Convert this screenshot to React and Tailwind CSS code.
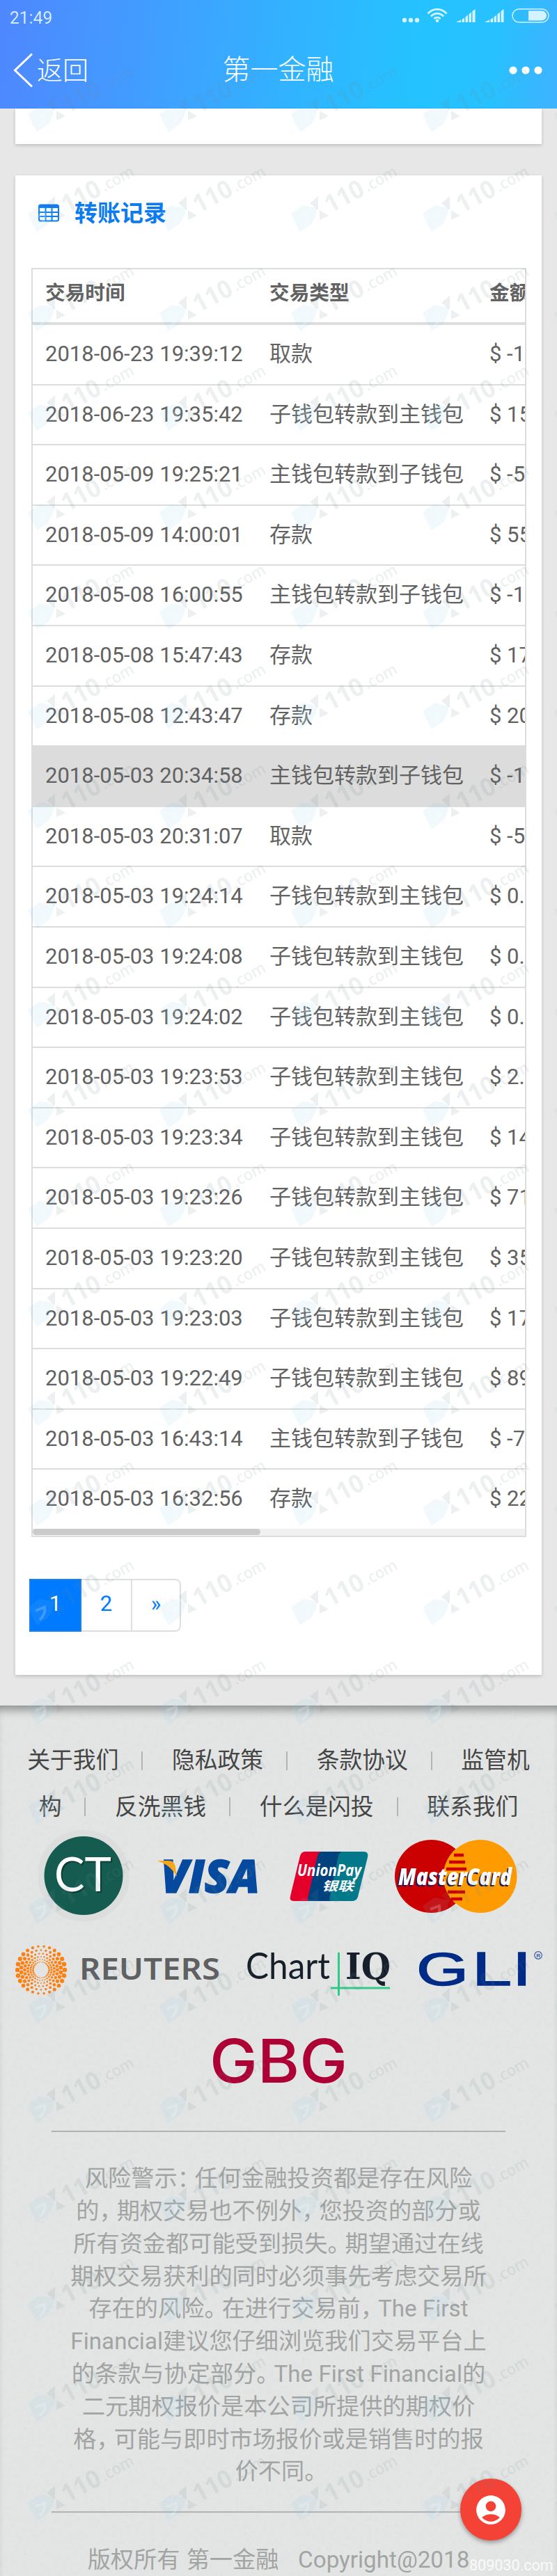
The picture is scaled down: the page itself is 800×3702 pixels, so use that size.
import React from 'react';
import { MdAccountCircle } from 'react-icons/md';

const transfers = [
  { time: '2018-06-23 19:39:12', type: '取款', amount: '$ -1' },
  { time: '2018-06-23 19:35:42', type: '子钱包转款到主钱包', amount: '$ 15' },
  { time: '2018-05-09 19:25:21', type: '主钱包转款到子钱包', amount: '$ -5' },
  { time: '2018-05-09 14:00:01', type: '存款', amount: '$ 55' },
  { time: '2018-05-08 16:00:55', type: '主钱包转款到子钱包', amount: '$ -1' },
  { time: '2018-05-08 15:47:43', type: '存款', amount: '$ 17' },
  { time: '2018-05-08 12:43:47', type: '存款', amount: '$ 20' },
  { time: '2018-05-03 20:34:58', type: '主钱包转款到子钱包', amount: '$ -1', active: true },
  { time: '2018-05-03 20:31:07', type: '取款', amount: '$ -5' },
  { time: '2018-05-03 19:24:14', type: '子钱包转款到主钱包', amount: '$ 0.' },
  { time: '2018-05-03 19:24:08', type: '子钱包转款到主钱包', amount: '$ 0.' },
  { time: '2018-05-03 19:24:02', type: '子钱包转款到主钱包', amount: '$ 0.' },
  { time: '2018-05-03 19:23:53', type: '子钱包转款到主钱包', amount: '$ 2.' },
  { time: '2018-05-03 19:23:34', type: '子钱包转款到主钱包', amount: '$ 14' },
  { time: '2018-05-03 19:23:26', type: '子钱包转款到主钱包', amount: '$ 71' },
  { time: '2018-05-03 19:23:20', type: '子钱包转款到主钱包', amount: '$ 35' },
  { time: '2018-05-03 19:23:03', type: '子钱包转款到主钱包', amount: '$ 17' },
  { time: '2018-05-03 19:22:49', type: '子钱包转款到主钱包', amount: '$ 89' },
  { time: '2018-05-03 16:43:14', type: '主钱包转款到子钱包', amount: '$ -7' },
  { time: '2018-05-03 16:32:56', type: '存款', amount: '$ 22' },
];

const linkRows = [
  ['关于我们', '隐私政策', '条款协议', '监管机'],
  ['构', '反洗黑钱', '什么是闪投', '联系我们'],
];

const warning = [
  '风险警示：任何金融投资都是存在风险',
  '的，期权交易也不例外，您投资的部分或',
  '所有资金都可能受到损失。期望通过在线',
  '期权交易获利的同时必须事先考虑交易所',
  '存在的风险。在进行交易前，The First',
  'Financial建议您仔细浏览我们交易平台上',
  '的条款与协定部分。The First Financial的',
  '二元期权报价是本公司所提供的期权价',
  '格，可能与即时市场报价或是销售时的报',
  '价不同。',
];

// Text stretched to an exact width, used by the partner logos
const LogoText = ({ x, y, w, size, family, fill, weight = 400, italic, children }) => (
  <text
    x={x}
    y={y}
    textLength={w}
    lengthAdjust="spacingAndGlyphs"
    fontSize={size}
    fontFamily={family}
    fontWeight={weight}
    fontStyle={italic ? 'italic' : 'normal'}
    fill={fill}
  >
    {children}
  </text>
);

const Signal = () => (
  <svg width="28" height="20" viewBox="0 0 28 20" fill="#d5f3ff">
    <path d="M0 19 L7 15.5 V19Z M8.5 15 L12 12.5 V19 H8.5Z M13.5 11.5 L17 8.5 V19 H13.5Z M18.5 7.5 L22 4.5 V19 H18.5Z M23.5 3 L27.5 0 V19 H23.5Z" />
  </svg>
);

const StatusBar = () => (
  <div className="flex h-[70px] items-start justify-between pl-[14px] pr-[11px] pt-[12px]">
    <span className="origin-left scale-x-[0.93] text-[26.5px] leading-[47px] -mt-[11px] text-[#d5ebff]">21:49</span>
    <div className="flex items-start">
      <svg className="mt-[13px]" width="26" height="8" viewBox="0 0 26 8" fill="#d5f3ff">
        <circle cx="4" cy="4" r="3.2" />
        <circle cx="13" cy="4" r="3.2" />
        <circle cx="22" cy="4" r="3.2" />
      </svg>
      <svg className="ml-[10px]" width="30" height="21" viewBox="0 0 30 21" fill="none" stroke="#d5f3ff" strokeWidth="2.7">
        <path d="M1.5 7.5 C9 -0.8 21 -0.8 28.5 7.5" />
        <path d="M6 11.5 C11 6 19 6 24 11.5" />
        <path d="M10.5 15 C13 12.3 17 12.3 19.5 15" />
        <circle cx="15" cy="17.8" r="2.3" fill="#d5f3ff" stroke="none" />
      </svg>
      <div className="ml-[12px] mt-px"><Signal /></div>
      <div className="ml-[13px] mt-px"><Signal /></div>
      <svg className="ml-[11px]" width="54" height="21" viewBox="0 0 54 21">
        <rect x="1" y="1" width="52" height="19" rx="9.5" fill="none" stroke="#d5f3ff" strokeWidth="1.5" />
        <path d="M24 3.5 H43 A7 7 0 0 1 43 17.5 H24Z" fill="#d5f3ff" />
      </svg>
    </div>
  </div>
);

const Header = () => (
  <header className="h-[156px] bg-[linear-gradient(97deg,#4f87ff_0%,#429cff_25%,#33b1ff_50%,#24c3ff_75%,#28c1ff_88%,#3fb2ff_100%)]">
    <StatusBar />
    <div className="grid h-[62px] grid-cols-3 items-center pl-[19px] pr-[20px] font-light text-white">
      <div className="flex items-center">
        <svg width="29" height="50" viewBox="0 0 29 50" fill="none" stroke="white" strokeWidth="3">
          <path d="M27 1.5 L2.5 25 L27 48.5" />
        </svg>
        <span className="ml-[5px] mt-[3px] text-[37px]">返回</span>
      </div>
      <h1 className="text-center text-[40px]">第一金融</h1>
      <svg className="justify-self-end" width="50" height="12" viewBox="0 0 50 12" fill="white">
        <circle cx="7" cy="6" r="5.6" />
        <circle cx="25" cy="6" r="5.6" />
        <circle cx="43" cy="6" r="5.6" />
      </svg>
    </div>
  </header>
);

const TransferTable = () => (
  <div className="mx-[23px] h-[1824px] w-[711px] overflow-hidden whitespace-nowrap border-2 border-[#dcdddd] text-[#626262]">
    <div className="grid h-[80px] grid-cols-[315px_316px_200px] border-b-4 border-[#dcdddd] pl-[18px] text-[28.7px] font-bold leading-[69px]">
      <span>交易时间</span>
      <span className="pl-[7px]">交易类型</span>
      <span className="pl-[7px]">金额</span>
    </div>
    {transfers.map((row, index) => (
      <div
        key={index}
        className={`grid grid-cols-[322px_316px_200px] border-[#dcdddd] pl-[18px] text-[31px] leading-[83px] ${
          row.active ? 'bg-[#dcdcdc]' : ''
        } ${index === transfers.length - 1 ? 'h-[85px]' : 'h-[86.6px] border-b-2'}`}
      >
        <span>{row.time}</span>
        <span>{row.type}</span>
        <span>{row.amount}</span>
      </div>
    ))}
    {/* Horizontal scrollbar */}
    <div className="h-[10px] bg-[#f1f1f1]">
      <div className="h-[9px] w-[327px] rounded-md bg-[#cbcbcb]" />
    </div>
  </div>
);

const Pagination = () => (
  <div className="ml-[20px] mt-[60px] flex h-[76px] w-[218px] overflow-hidden rounded-r-lg text-center text-[31px] leading-[68px] text-[#007bff]">
    <div className="w-[75px] border-2 border-[#1b80ef] bg-[#007bff] text-white">1</div>
    <div className="w-[73px] border-y-2 border-r-2 border-[#dcdee0]">2</div>
    <div className="w-[70px] rounded-r-lg border-y-2 border-r-2 border-[#dcdee0]">»</div>
  </div>
);

// Orange dotted sun: rings of dots, larger towards the left and right
const rings = [
  { r: 34, n: 26, s: 2.2 },
  { r: 28.5, n: 26, s: 1.9 },
  { r: 23.5, n: 26, s: 1.6 },
  { r: 19, n: 26, s: 1.35 },
  { r: 15, n: 26, s: 1.1 },
  { r: 11.5, n: 26, s: 0.95 },
];

const Reuters = () => (
  <svg width="293" height="100" viewBox="22 2780 293 100">
    {rings.map((ring, i) =>
      Array.from({ length: ring.n }, (_, k) => {
        const a = ((k + (i % 2) * 0.5) / ring.n) * Math.PI * 2;
        return (
          <circle
            key={`${i}-${k}`}
            cx={59 + Math.cos(a) * ring.r}
            cy={2831 + Math.sin(a) * ring.r}
            r={ring.s * (0.7 + 0.8 * Math.abs(Math.cos(a)))}
            fill="#fb8114"
          />
        );
      })
    )}
    <LogoText x={114} y={2845} w={202} size={43} family="Noto Sans" weight={600} fill="#5f6062">REUTERS</LogoText>
  </svg>
);

const ChartIQ = () => (
  <svg width="205" height="100" viewBox="355 2780 205 100">
    <LogoText x={353} y={2844} w={121} size={52} family="Lato" weight={400} fill="#17202a">Chart</LogoText>
    <LogoText x={496} y={2844} w={65} size={52} family="DejaVu Serif" weight={700} fill="#17202a">IQ</LogoText>
    <path d="M486.5 2806 V2868 M475 2857 H560" stroke="#30cb8b" strokeWidth="3" />
  </svg>
);

const Gli = () => (
  <svg width="178" height="100" viewBox="602 2780 178 100">
    <g stroke="#002b87" strokeWidth="1.5">
      <LogoText x={598} y={2853} w={75} size={67} family="Liberation Sans" fill="#002b87">G</LogoText>
      <LogoText x={678} y={2853} w={57} size={68} family="Liberation Sans" fill="#002b87">L</LogoText>
      <LogoText x={736} y={2853} w={27} size={68} family="Liberation Sans" fill="#002b87">I</LogoText>
    </g>
    <circle cx="773" cy="2810" r="5.3" fill="none" stroke="#3c5a9e" strokeWidth="1.2" />
    <text x="770.3" y="2813" fontSize="8" fontFamily="Liberation Sans" fontWeight="700" fill="#3c5a9e">R</text>
  </svg>
);

const CtLogo = () => (
  <svg width="130" height="140" viewBox="55 2625 130 140">
    <circle cx="120" cy="2695.5" r="66" fill="#dcdddd" />
    <circle cx="120" cy="2695.5" r="56.5" fill="#155b50" />
    <g className="[filter:drop-shadow(2px_2px_0_#0c3d35)]">
      <LogoText x={78} y={2718} w={82} size={68} family="Lato" fill="#ffffff">CT</LogoText>
    </g>
  </svg>
);

const Visa = () => (
  <svg width="148" height="140" viewBox="226 2625 148 140">
    <g stroke="#064a9f" strokeWidth="1.5">
      <LogoText x={231} y={2720} w={142} size={65} family="Open Sans" weight={800} italic fill="#064a9f">VISA</LogoText>
    </g>
    <path d="M225 2674 H242 C249 2674 251 2678 252 2684 L254 2697 C248 2686 238 2677 225 2674Z" fill="#f9a61a" />
  </svg>
);

const UnionPay = () => (
  <svg width="115" height="140" viewBox="415 2625 115 140">
    <path d="M438 2661 H462 L448 2732 H422 Q415 2732 417 2725 L431 2667 Q433 2661 438 2661Z" fill="#e4002b" />
    <path d="M462 2661 H494 L480 2732 H443 Q441 2730 443 2724 L456 2667 Q458 2661 462 2661Z" fill="#01417e" />
    <path d="M492 2661 H522 Q530 2661 528 2669 L514 2726 Q512 2732 506 2732 H475 Q472 2730 474 2724 L486 2667 Q488 2661 492 2661Z" fill="#01798a" />
    <LogoText x={427} y={2696} w={92} size={23} family="Open Sans" weight={700} italic fill="#ffffff">UnionPay</LogoText>
    <LogoText x={462} y={2717} w={46} size={18} family="Noto Sans CJK SC" weight={700} italic fill="#ffffff">银联</LogoText>
  </svg>
);

const MasterCard = () => (
  <svg width="176" height="140" viewBox="567 2625 176 140">
    <circle cx="619.5" cy="2696.5" r="52.5" fill="#cb0000" />
    <circle cx="690" cy="2696.5" r="52.5" fill="#fe9b00" />
    <path d="M654 2657.5 a52.5 52.5 0 0 0 0 78 a52.5 52.5 0 0 0 0 -78Z" fill="#fe9b00" />
    <path d="M652 2666 H666 M645 2676 H668 M641 2686 H670 M643 2719 H668 M648 2729 H664" stroke="#cb0000" strokeWidth="4.5" />
    <g className="[filter:drop-shadow(-1.5px_2px_0_#1c1c5c)]">
      <LogoText x={572} y={2709} w={163} size={34} family="Open Sans" weight={800} italic fill="#ffffff">MasterCard</LogoText>
    </g>
  </svg>
);

const Gbg = () => (
  <svg width="200" height="80" viewBox="301 2922 200 80">
    <LogoText x={302} y={2993} w={198} size={87} family="Inter" weight={500} fill="#ad0136">GBG</LogoText>
  </svg>
);

// Full-width punctuation is set tighter than the characters
const WarningLine = ({ text }) => (
  <span className="block whitespace-nowrap">
    {text.split(/([，。：])/).map((part, i) => (
      <span key={i} className={i % 2 ? 'tracking-[-8px]' : ''}>{part}</span>
    ))}
  </span>
);

const Footer = () => (
  <footer className="relative h-[1251px] overflow-hidden bg-[#e4e6e5] shadow-[inset_0_14px_14px_-8px_rgba(0,0,0,0.4)]">
    <svg className="absolute inset-0 opacity-[0.07]" width="800" height="1251">
      <filter id="paper">
        <feTurbulence type="fractalNoise" baseFrequency="0.18" numOctaves="2" />
        <feColorMatrix type="saturate" values="0" />
      </filter>
      <rect width="800" height="1251" filter="url(#paper)" />
    </svg>
    <div className="relative">
      <nav className="pt-[46px] text-[32.8px] leading-[66.6px] text-[#454545]">
        {linkRows.map((links, row) => (
          <div key={row} className="flex items-center justify-center">
            {links.map((link, i) => (
              <React.Fragment key={link}>
                {i > 0 && <span className="ml-[33px] mr-[41.5px] h-[27px] w-[2px] bg-[#b3b5b4]" />}
                <span>{link}</span>
              </React.Fragment>
            ))}
          </div>
        ))}
      </nav>
      <div className="-mt-[5px] flex pl-[55px]">
        <CtLogo />
        <div className="ml-[41px]"><Visa /></div>
        <div className="ml-[41px]"><UnionPay /></div>
        <div className="ml-[37px]"><MasterCard /></div>
      </div>
      <div className="mt-[15px] flex pl-[22px]">
        <Reuters />
        <div className="ml-[40px]"><ChartIQ /></div>
        <div className="ml-[42px]"><Gli /></div>
      </div>
      <div className="mt-[42px] flex justify-center"><Gbg /></div>
      <hr className="mx-[74px] mt-[60px] border-t-2 border-[#b1b3b2]" />
      <p className="mt-[44px] text-center text-[33.2px] leading-[46.8px] text-[#a2a4a3]">
        {warning.map((line) => <WarningLine key={line} text={line} />)}
      </p>
      <hr className="mx-[74px] mt-[33px] border-t-2 border-[#b1b3b2]" />
      <p className="mt-[45px] whitespace-pre text-center text-[33.2px] leading-[46.8px] text-[#a2a4a3] [word-spacing:1px]">
        {'版权所有 第一金融   Copyright@2018'}
      </p>
    </div>
  </footer>
);

const columns = [40, 229, 418, 607, 796];

const Watermark = () => (
  <svg className="pointer-events-none absolute inset-0" width="800" height="3702">
    <defs>
      <g id="mark">
        <path d="M0 12 L17 0 L38 4 L36 14 L30 26 L13 38 Q6 26 0 12Z" fill="#7fc4ee" opacity="0.11" />
        <path d="M11 17 L24 12 Q26 22 17 30" fill="none" stroke="white" strokeWidth="4" opacity="0.2" />
        <g fill="#6d8a93" opacity="0.12">
          <path d="M27 -3 L39 -13 V7Z M41 7 L54 15 L41 21Z" />
          <text transform="translate(56 12) rotate(-28)" fontFamily="Open Sans" fontWeight="700" fontSize="36" textLength="59" lengthAdjust="spacingAndGlyphs">110</text>
          <text transform="translate(110 -19) rotate(-29)" fontFamily="Open Sans" fontWeight="600" fontSize="23" textLength="51" lengthAdjust="spacingAndGlyphs">.com</text>
        </g>
      </g>
    </defs>
    {Array.from({ length: 25 }, (_, row) =>
      columns.map((x) => <use key={`${row}-${x}`} href="#mark" x={x} y={152 + row * 143.05} />)
    )}
  </svg>
);

const App = () => {
  return (
    <div className="relative h-[3702px] w-[800px] overflow-hidden bg-[#e7e7e7] font-['Roboto','Noto_Sans_CJK_SC',sans-serif]">
      <Header />
      <main className="px-[22px]">
        <div className="h-[51px] bg-white shadow-[0_2px_5px_rgba(0,0,0,0.18)]" />
        <section className="mt-[45px] h-[2155px] bg-white shadow-[0_2px_5px_rgba(0,0,0,0.18)]">
          <div className="flex h-[133px] items-start pl-[33px] pt-[30px] text-[#0b7bf0]">
            <svg className="mt-[11px]" width="30" height="26" viewBox="0 0 30 26" fill="none" stroke="currentColor" strokeWidth="2">
              <rect x="1" y="1.5" width="28" height="23" rx="2.5" />
              <path d="M1 4 H29" strokeWidth="4" />
              <path d="M1 12 H29 M1 18 H29 M10.5 4 V24 M19.5 4 V24" />
            </svg>
            <h2 className="ml-[22px] mt-px text-[33px] font-bold leading-[48px]">转账记录</h2>
          </div>
          <TransferTable />
          <Pagination />
        </section>
      </main>
      <div className="mt-[44px]">
        <Footer />
      </div>

      {/* Floating account button */}
      <div className="absolute left-[661px] top-[3562px] flex h-[89px] w-[88px] items-center justify-center rounded-full bg-[#f44336] shadow-[0_3px_6px_rgba(0,0,0,0.35)]">
        <MdAccountCircle size={50} color="white" />
      </div>
      <Watermark />
      <span className="absolute left-[674px] top-[3672px] text-[21.5px] leading-[30px] text-white/80">809030.com</span>
    </div>
  );
};

export default App;
